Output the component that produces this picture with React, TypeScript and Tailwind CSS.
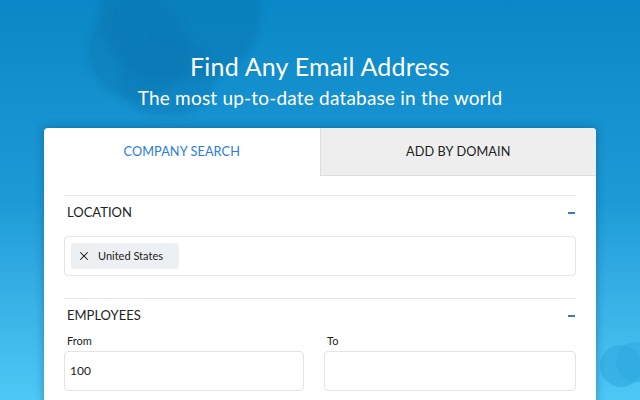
import { X } from "lucide-react";

function Section({ title, children }: { title: string; children: React.ReactNode }) {
  return (
    <div className="border-t border-[#e6e6e6]">
      <div className="flex h-[33px] items-center justify-between pl-[3px] pr-[1px]">
        <span className="text-[13px] text-[#222]">{title}</span>
        <span className="h-[2px] w-[7px] bg-[#3e78c0]" />
      </div>
      {children}
    </div>
  );
}

export default function App() {
  return (
    <div
      className="relative h-[400px] w-[640px] overflow-hidden bg-gradient-to-b from-[#0a87c6] via-[#1c9ad6] to-[#4ec8f6] text-white"
      style={{ fontFamily: "Lato, 'Open Sans', sans-serif" }}
    >
      {/* clouds */}
      <div className="absolute left-[100px] top-[-50px] h-[130px] w-[160px] rounded-full bg-[#0a78b3]/55 blur-[3px]" />
      <div className="absolute left-[88px] top-[0px] h-[100px] w-[100px] rounded-full bg-[#0a78b3]/45 blur-[3px]" />
      <div className="absolute left-[120px] top-[40px] h-[75px] w-[95px] rounded-full bg-[#0a78b3]/40 blur-[3px]" />
      <div className="absolute left-[600px] top-[345px] h-[42px] w-[42px] rounded-full bg-[#2ea9df]/60" />
      <div className="absolute left-[616px] top-[342px] h-[40px] w-[40px] rounded-full bg-[#2ea9df]/60" />

      <div className="relative flex flex-col items-center pt-[50px]">
        <h1 className="text-[25px] leading-[32px] tracking-[0.2px]">Find Any Email Address</h1>
        <p className="mt-[3px] text-[19px] leading-[26px] tracking-[0.2px]">
          The most up-to-date database in the world
        </p>
      </div>

      <div className="relative mx-[44px] mt-[17px] h-[300px] rounded-[4px] bg-white shadow-[0_0_10px_rgba(0,40,80,0.35)]">
        <div className="flex h-[48px] text-[12.7px] tracking-[0.1px]">
          <div className="flex flex-1 items-center justify-center rounded-tl-[4px] text-[#2b7be0]">
            COMPANY SEARCH
          </div>
          <div className="flex flex-1 items-center justify-center rounded-tr-[4px] border-b border-l border-[#dddddd] bg-[#eeeeee] text-[#222]">
            ADD BY DOMAIN
          </div>
        </div>

        <div className="px-[20px] pt-[19px]">
          <Section title="LOCATION">
            <div className="mt-[7px] flex h-[40px] items-center rounded-[4px] border border-[#e3e3e3] px-[6px]">
              <div className="flex h-[26px] items-center gap-[7px] rounded-[3px] bg-[#ecf0f3] pl-[6px] pr-[16px] text-[11px] text-[#222]">
                <X className="h-[14px] w-[14px]" strokeWidth={1.8} />
                <span>United States</span>
              </div>
            </div>
          </Section>

          <div className="mt-[22px]">
            <Section title="EMPLOYEES">
              <div className="grid grid-cols-[240px_1fr] gap-[20px]">
                <div>
                  <div className="pl-[3px] text-[11px] leading-[18px] text-[#222]">From</div>
                  <div className="mt-[1px] flex h-[40px] items-center rounded-[4px] border border-[#e3e3e3] px-[5px] text-[12px] text-[#222]">
                    100
                  </div>
                </div>
                <div>
                  <div className="pl-[3px] text-[11px] leading-[18px] text-[#222]">To</div>
                  <div className="mt-[1px] h-[40px] rounded-[4px] border border-[#e3e3e3]" />
                </div>
              </div>
            </Section>
          </div>
        </div>
      </div>
    </div>
  );
}
